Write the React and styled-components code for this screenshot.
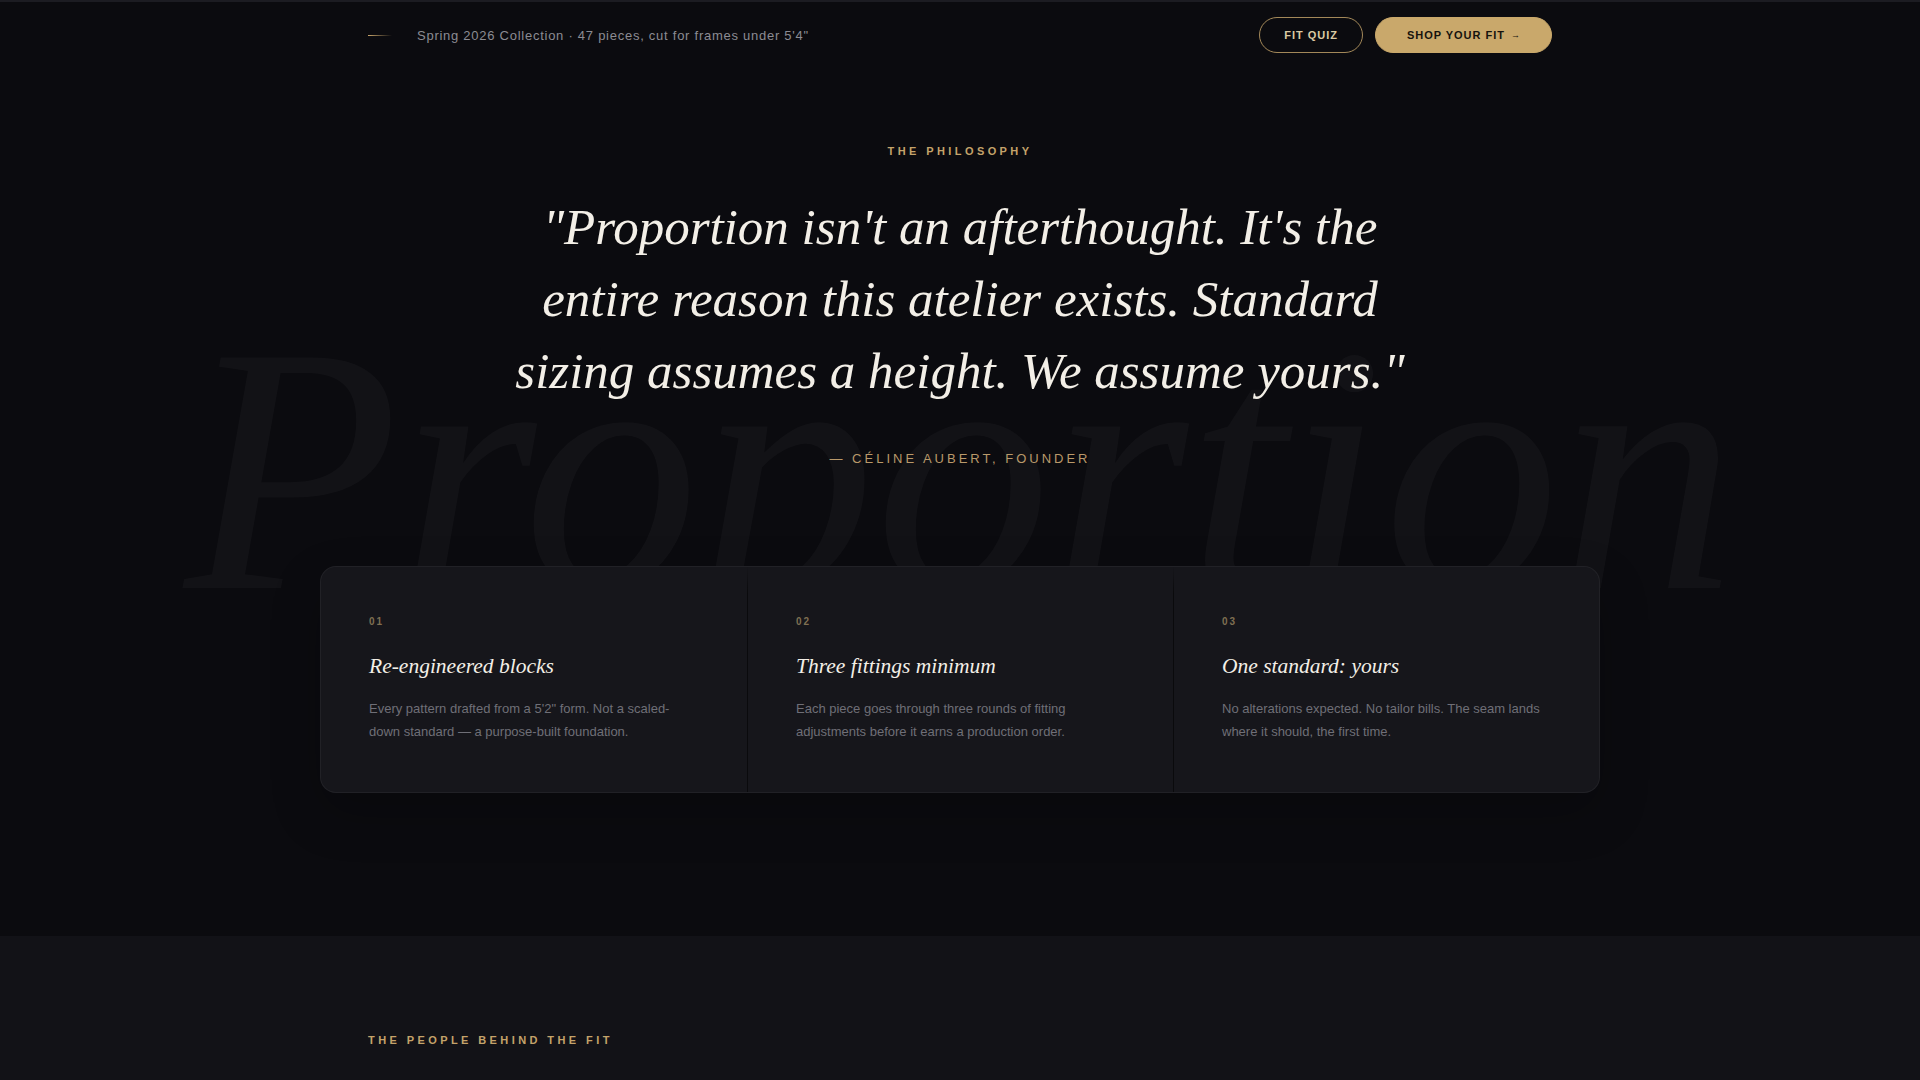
import React from "react";
import styled, { createGlobalStyle } from "styled-components";

const GlobalStyle = createGlobalStyle`
  * { box-sizing: border-box; }
  html, body { margin: 0; padding: 0; }
  body {
    background: #0b0b0f;
    color: #f2eee6;
    font-family: "Liberation Sans", Arial, sans-serif;
    -webkit-font-smoothing: antialiased;
  }
`;

const Page = styled.div`
  min-height: 100vh;
  background: #0b0b0f;
  border-top: 2px solid #1c1c22;
`;

const Nav = styled.header`
  max-width: 1280px;
  height: 66px;
  margin: 0 auto;
  padding: 0 48px;
  display: flex;
  align-items: center;
  justify-content: space-between;
`;

const NavLead = styled.div`
  display: flex;
  align-items: center;
  gap: 25px;
`;

const Dash = styled.span`
  display: block;
  width: 24px;
  height: 1px;
  background: linear-gradient(90deg, #c9a66b, rgba(201, 166, 107, 0));
`;

const NavNote = styled.span`
  font-size: 13px;
  letter-spacing: 0.74px;
  color: #8b8b93;
`;

const NavActions = styled.div`
  display: flex;
  align-items: center;
  gap: 12px;
`;

const Button = styled.button`
  height: 36px;
  padding: 0 ${(p) => (p.$solid ? "31px" : "24px")};
  border-radius: 18px;
  border: 1px solid ${(p) => (p.$solid ? "#c9a86b" : "rgba(201, 168, 107, 0.8)")};
  background: ${(p) => (p.$solid ? "#c9a86b" : "transparent")};
  color: ${(p) => (p.$solid ? "#16130e" : "#dccaa3")};
  font-family: "Liberation Sans", Arial, sans-serif;
  font-size: 11px;
  font-weight: 700;
  letter-spacing: 0.09em;
  text-transform: uppercase;
  cursor: pointer;
  display: inline-flex;
  align-items: center;
  gap: 6px;
`;

const Arrow = styled.span`
  font-size: 9px;
  letter-spacing: 0;
`;

const Hero = styled.section`
  position: relative;
  overflow: hidden;
  padding: 75px 0 143px;
`;

/* Oversized italic word set behind the quote as a backdrop */
const Watermark = styled.div`
  position: absolute;
  left: 0;
  right: 0;
  top: 225px;
  text-align: center;
  font-family: "Liberation Serif", "Times New Roman", serif;
  font-style: italic;
  font-size: 352px;
  line-height: 1;
  color: rgba(255, 255, 255, 0.033);
  pointer-events: none;
  user-select: none;
  white-space: nowrap;
  z-index: 0;
`;

const HeroInner = styled.div`
  position: relative;
  z-index: 1;
  max-width: 1280px;
  margin: 0 auto;
  display: flex;
  flex-direction: column;
  align-items: center;
`;

const Eyebrow = styled.div`
  font-size: 11px;
  line-height: 16px;
  font-weight: 700;
  letter-spacing: 0.31em;
  text-transform: uppercase;
  color: #c4a36a;
  align-self: ${(p) => (p.$start ? "flex-start" : "center")};
`;

const Quote = styled.blockquote`
  margin: 32px 0 0;
  max-width: 920px;
  text-align: center;
  font-family: "Liberation Serif", "Times New Roman", serif;
  font-style: italic;
  font-size: 51px;
  line-height: 72px;
  color: #f3efe7;
`;

const Attribution = styled.div`
  margin-top: 42px;
  font-size: 13px;
  line-height: 20px;
  letter-spacing: 3px;
  text-transform: uppercase;
  color: #b9996a;
`;

const Pillars = styled.div`
  margin-top: 97px;
  width: 100%;
  display: grid;
  grid-template-columns: repeat(3, 1fr);
  background: #16161b;
  border: 1px solid rgba(255, 255, 255, 0.05);
  border-radius: 16px;
  box-shadow: 0 20px 50px rgba(0, 0, 0, 0.22);
  overflow: hidden;
`;

const Pillar = styled.article`
  padding: 48px;
  border-left: ${(p) => (p.$first ? "0" : "1px solid")};
  border-image: ${(p) =>
    p.$first
      ? "none"
      : "linear-gradient(to bottom, rgba(0,0,0,0) 0%, rgba(0,0,0,0.55) 12%, rgba(0,0,0,0.55) 100%) 1"};
`;

const PillarIndex = styled.div`
  font-size: 10px;
  line-height: 14px;
  font-weight: 700;
  letter-spacing: 0.2em;
  color: #7f6f52;
`;

const PillarTitle = styled.h3`
  margin: 23px 0 0;
  font-family: "Liberation Serif", "Times New Roman", serif;
  font-style: italic;
  font-weight: 400;
  font-size: 21.5px;
  line-height: 28px;
  color: #f3efe7;
`;

const PillarText = styled.p`
  margin: 18px 0 0;
  font-size: 13px;
  line-height: 1.75;
  color: #6f6f77;
`;

const People = styled.section`
  background: #121217;
  padding: 96px 0 120px;
`;

const PeopleInner = styled.div`
  max-width: 1280px;
  margin: 0 auto;
  padding: 0 48px;
  display: flex;
  flex-direction: column;
`;

const pillars = [
  {
    n: "01",
    title: "Re-engineered blocks",
    text: "Every pattern drafted from a 5'2\" form. Not a scaled-down standard \u2014 a purpose-built foundation.",
  },
  {
    n: "02",
    title: "Three fittings minimum",
    text: "Each piece goes through three rounds of fitting adjustments before it earns a production order.",
  },
  {
    n: "03",
    title: "One standard: yours",
    text: "No alterations expected. No tailor bills. The seam lands where it should, the first time.",
  },
];

export default function App() {
  return (
    <>
      <GlobalStyle />
      <Page>
        <Nav>
          <NavLead>
            <Dash />
            <NavNote>Spring 2026 Collection · 47 pieces, cut for frames under 5'4"</NavNote>
          </NavLead>
          <NavActions>
            <Button>Fit Quiz</Button>
            <Button $solid>
              Shop Your Fit <Arrow>→</Arrow>
            </Button>
          </NavActions>
        </Nav>

        <Hero>
          <Watermark aria-hidden="true">Proportion</Watermark>
          <HeroInner>
            <Eyebrow>The Philosophy</Eyebrow>
            <Quote>
              "Proportion isn't an afterthought. It's the entire reason this atelier exists. Standard
              sizing assumes a height. We assume yours."
            </Quote>
            <Attribution>— Céline Aubert, Founder</Attribution>
            <Pillars>
              {pillars.map((p, i) => (
                <Pillar key={p.n} $first={i === 0}>
                  <PillarIndex>{p.n}</PillarIndex>
                  <PillarTitle>{p.title}</PillarTitle>
                  <PillarText>{p.text}</PillarText>
                </Pillar>
              ))}
            </Pillars>
          </HeroInner>
        </Hero>

        <People>
          <PeopleInner>
            <Eyebrow $start>The People Behind the Fit</Eyebrow>
          </PeopleInner>
        </People>
      </Page>
    </>
  );
}
